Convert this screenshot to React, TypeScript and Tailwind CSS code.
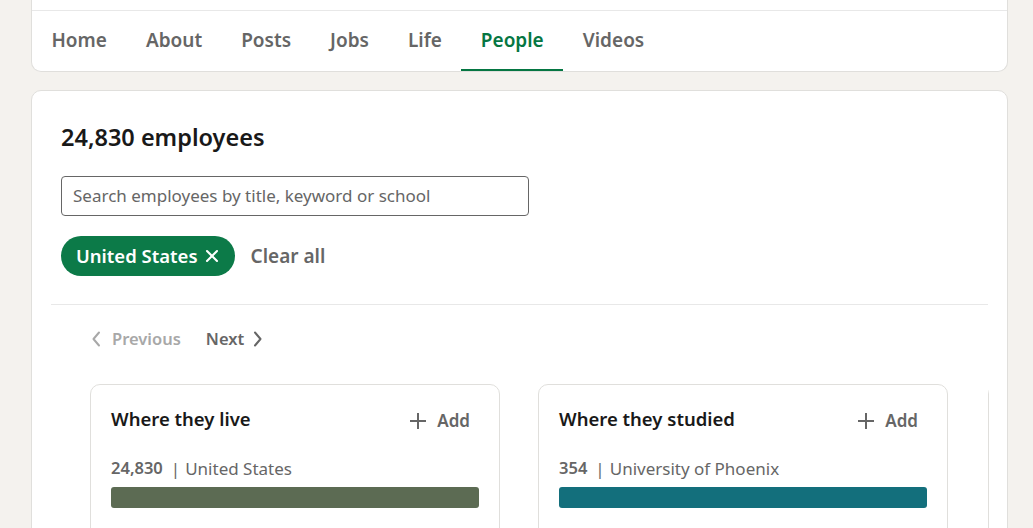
import { X } from 'lucide-react';

const tabs = ['Home', 'About', 'Posts', 'Jobs', 'Life', 'People', 'Videos'];

const insights = [
  { title: 'Where they live', count: '24,830', label: 'United States', color: 'bg-[#5c6b53]' },
  { title: 'Where they studied', count: '354', label: 'University of Phoenix', color: 'bg-[#136f7c]' },
];

const font = { fontFamily: '"Noto Sans", "Open Sans", sans-serif' };

function Chevron({ dir }: { dir: 'left' | 'right' }) {
  return (
    <svg width="10" height="16" viewBox="0 0 10 16" fill="none" stroke="currentColor" strokeWidth="2" strokeLinecap="round" strokeLinejoin="round">
      {dir === 'left' ? <path d="M8 1.5 L2.5 8 L8 14.5" /> : <path d="M2 1.5 L7.5 8 L2 14.5" />}
    </svg>
  );
}

function PlusIcon() {
  return (
    <svg width="16" height="16" viewBox="0 0 16 16" fill="none" stroke="currentColor" strokeWidth="2">
      <path d="M8 0 V16 M0 8 H16" />
    </svg>
  );
}

export default function App() {
  return (
    <div className="min-h-screen bg-[#f4f2ee] pl-[31px] pr-[25px]" style={font}>
      {/* tab bar card */}
      <div className="-mt-[9px] bg-white border border-[#e0dfdc] border-t-0 rounded-b-[10px]">
        <div className="h-[20px] border-b border-[#e8e8e8]" />
        <nav className="flex h-[60px]">
          {tabs.map((t) => (
            <div
              key={t}
              className={
                t === 'People'
                  ? 'px-[19.5px] flex items-center text-[19px] font-semibold text-[#057642] border-b-[2px] border-[#057642]'
                  : 'px-[19.5px] flex items-center text-[19px] font-semibold text-[#666666] border-b-[2px] border-transparent'
              }
            >
              {t}
            </div>
          ))}
        </nav>
      </div>

      {/* people card */}
      <div className="mt-[18px] bg-white border border-[#e0dfdc] rounded-[10px] px-[19px] h-[480px] overflow-hidden">
        <div className="px-[10px] pt-[28px]">
          <h1 className="text-[23.5px] leading-[36px] font-semibold text-[#191919]">24,830 employees</h1>
          <div className="mt-[21px] w-[468px] h-[40px] border border-[#666666] rounded-[4px] flex items-center px-[11px] text-[17px] text-[#666666]">
            Search employees by title, keyword or school
          </div>
          <div className="mt-[20px] flex items-center gap-[16px] h-[40px]">
            <div className="h-[40px] bg-[#0c7a48] rounded-full flex items-center gap-[4px] pl-[15px] pr-[13px] text-white text-[18.5px] font-semibold">
              United States
              <X size={20} strokeWidth={2.5} />
            </div>
            <span className="text-[19px] font-semibold text-[#666666]">Clear all</span>
          </div>
        </div>

        <div className="mt-[28px] border-t border-[#e8e8e8]" />

        <div className="flex items-center gap-[25px] pl-[40px] pt-[21px] h-[47px] text-[16.5px] font-semibold">
          <span className="flex items-center gap-[11px] text-[#a8a8a8]">
            <Chevron dir="left" />
            Previous
          </span>
          <span className="flex items-center gap-[9px] text-[#666666]">
            Next
            <Chevron dir="right" />
          </span>
        </div>

        <div className="mt-[32px] w-[938px] overflow-hidden">
          <div className="flex gap-[38px] pl-[39px]">
            {insights.map((c) => (
              <div key={c.title} className="shrink-0 w-[410px] h-[200px] border border-[#e0dfdc] rounded-[10px] px-[20px] pt-[20px]">
                <div className="flex items-center justify-between">
                  <span className="text-[18.5px] font-semibold text-[#191919]">{c.title}</span>
                  <span className="mt-[3px] flex items-center gap-[11px] text-[17px] font-semibold text-[#666666] pr-[9px]">
                    <PlusIcon />
                    Add
                  </span>
                </div>
                <div className="mt-[22px] text-[17px] text-[#666666] flex items-center">
                  <span className="font-semibold text-[16.5px]">{c.count}</span>
                  <span className="ml-[8px] mr-[5px]">|</span>
                  <span>{c.label}</span>
                </div>
                <div className={`mt-[6px] h-[21px] rounded-[3px] ${c.color}`} />
              </div>
            ))}
            <div className="ml-[2px] shrink-0 w-[410px] h-[200px] border border-[#e0dfdc] rounded-[10px]" />
          </div>
        </div>
      </div>
    </div>
  );
}
